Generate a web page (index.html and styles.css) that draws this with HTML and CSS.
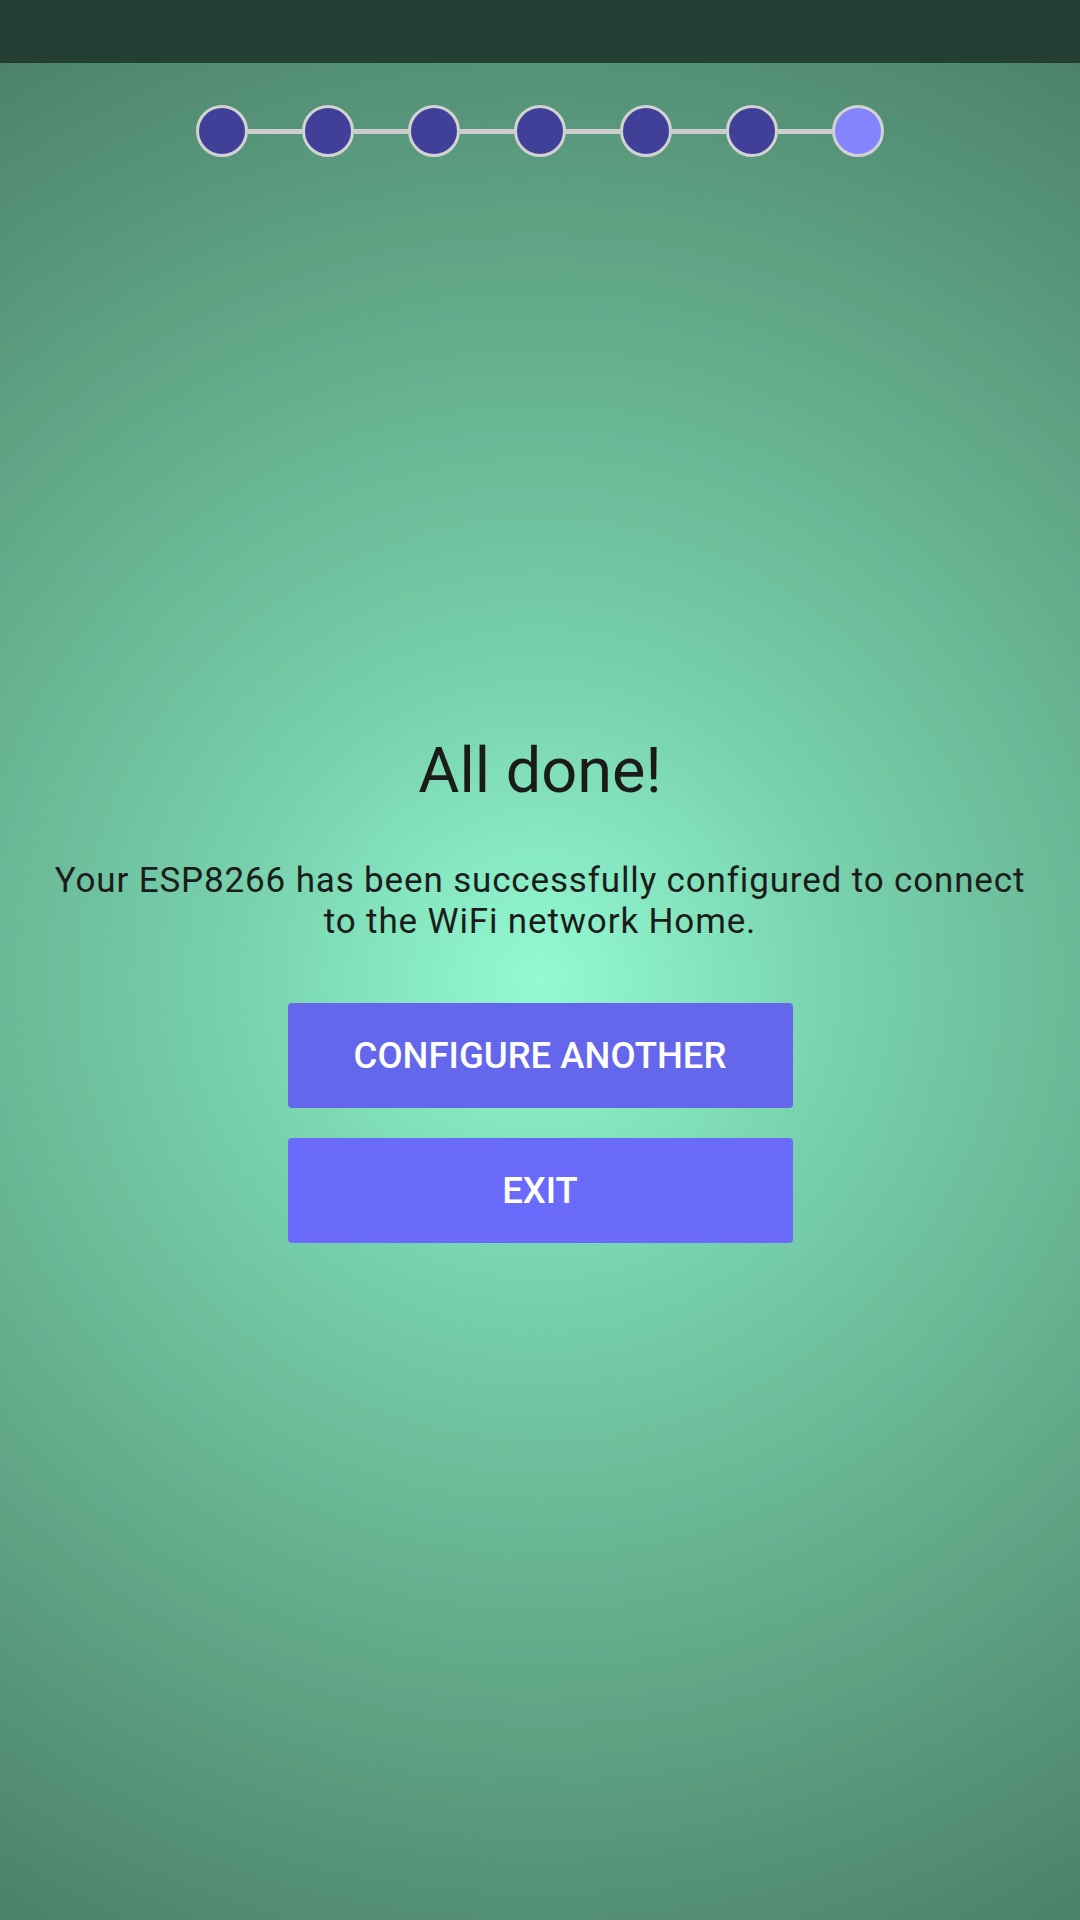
FILE: index.html
```html
<!DOCTYPE html>
<html lang="en">
<head>
<meta charset="utf-8">
<title>All done</title>
<link rel="stylesheet" href="styles.css">
</head>
<body>
<div class="screen">
  <div class="status-bar"></div>
  <div class="stepper">
    <span class="dot done"></span><span class="link"></span>
    <span class="dot done"></span><span class="link"></span>
    <span class="dot done"></span><span class="link"></span>
    <span class="dot done"></span><span class="link"></span>
    <span class="dot done"></span><span class="link"></span>
    <span class="dot done"></span><span class="link"></span>
    <span class="dot current"></span>
  </div>
  <main class="content">
    <h1 class="title">All done!</h1>
    <p class="message">Your ESP8266 has been successfully configured to connect to the WiFi network Home.</p>
    <div class="actions">
      <button class="btn btn-primary">CONFIGURE ANOTHER</button>
      <button class="btn btn-secondary">EXIT</button>
    </div>
  </main>
</div>
</body>
</html>
```
FILE: styles.css
```css
html, body {
  margin: 0;
  padding: 0;
}
body {
  width: 1080px;
  height: 1920px;
  overflow: hidden;
  font-family: Roboto, "Liberation Sans", sans-serif;
}
.screen {
  width: 1080px;
  height: 1920px;
  display: flex;
  flex-direction: column;
  background: radial-gradient(circle at 540px 980px, #93fad3 0px, #78d2ad 300px, #64ad8d 650px, #4a7e67 1100px);
}
.status-bar {
  height: 63px;
  background: #244034;
  flex: none;
}
.stepper {
  display: flex;
  align-items: center;
  justify-content: center;
  padding-top: 42px;
}
.dot {
  width: 52px;
  height: 52px;
  box-sizing: border-box;
  border-radius: 50%;
  border: 3px solid #d2d2d2;
  flex: none;
}
.dot.done {
  background: #414098;
}
.dot.current {
  background: #8484fe;
}
.link {
  width: 54px;
  height: 5px;
  background: #cdcdcd;
  flex: none;
}
.content {
  display: flex;
  flex-direction: column;
  align-items: center;
  padding: 0 44px;
  margin-top: 576px;
}
.title {
  margin: 0;
  font-size: 63px;
  line-height: 76px;
  font-weight: 400;
  color: #1b1b1b;
}
.message {
  margin: 51px 0 0;
  font-size: 35px;
  letter-spacing: 0.85px;
  line-height: 41px;
  color: #1c1c1c;
  text-align: center;
}
.actions {
  margin-top: 61px;
  display: flex;
  flex-direction: column;
  gap: 30px;
}
.btn {
  width: 505px;
  height: 105px;
  border: none;
  border-radius: 4px;
  font-family: Roboto, "Liberation Sans", sans-serif;
  font-weight: 500;
  font-size: 36.5px;
  color: #ffffff;
  padding: 0;
}
.btn-primary {
  background: #6466eb;
}
.btn-secondary {
  background: #6a6bfa;
}
```
